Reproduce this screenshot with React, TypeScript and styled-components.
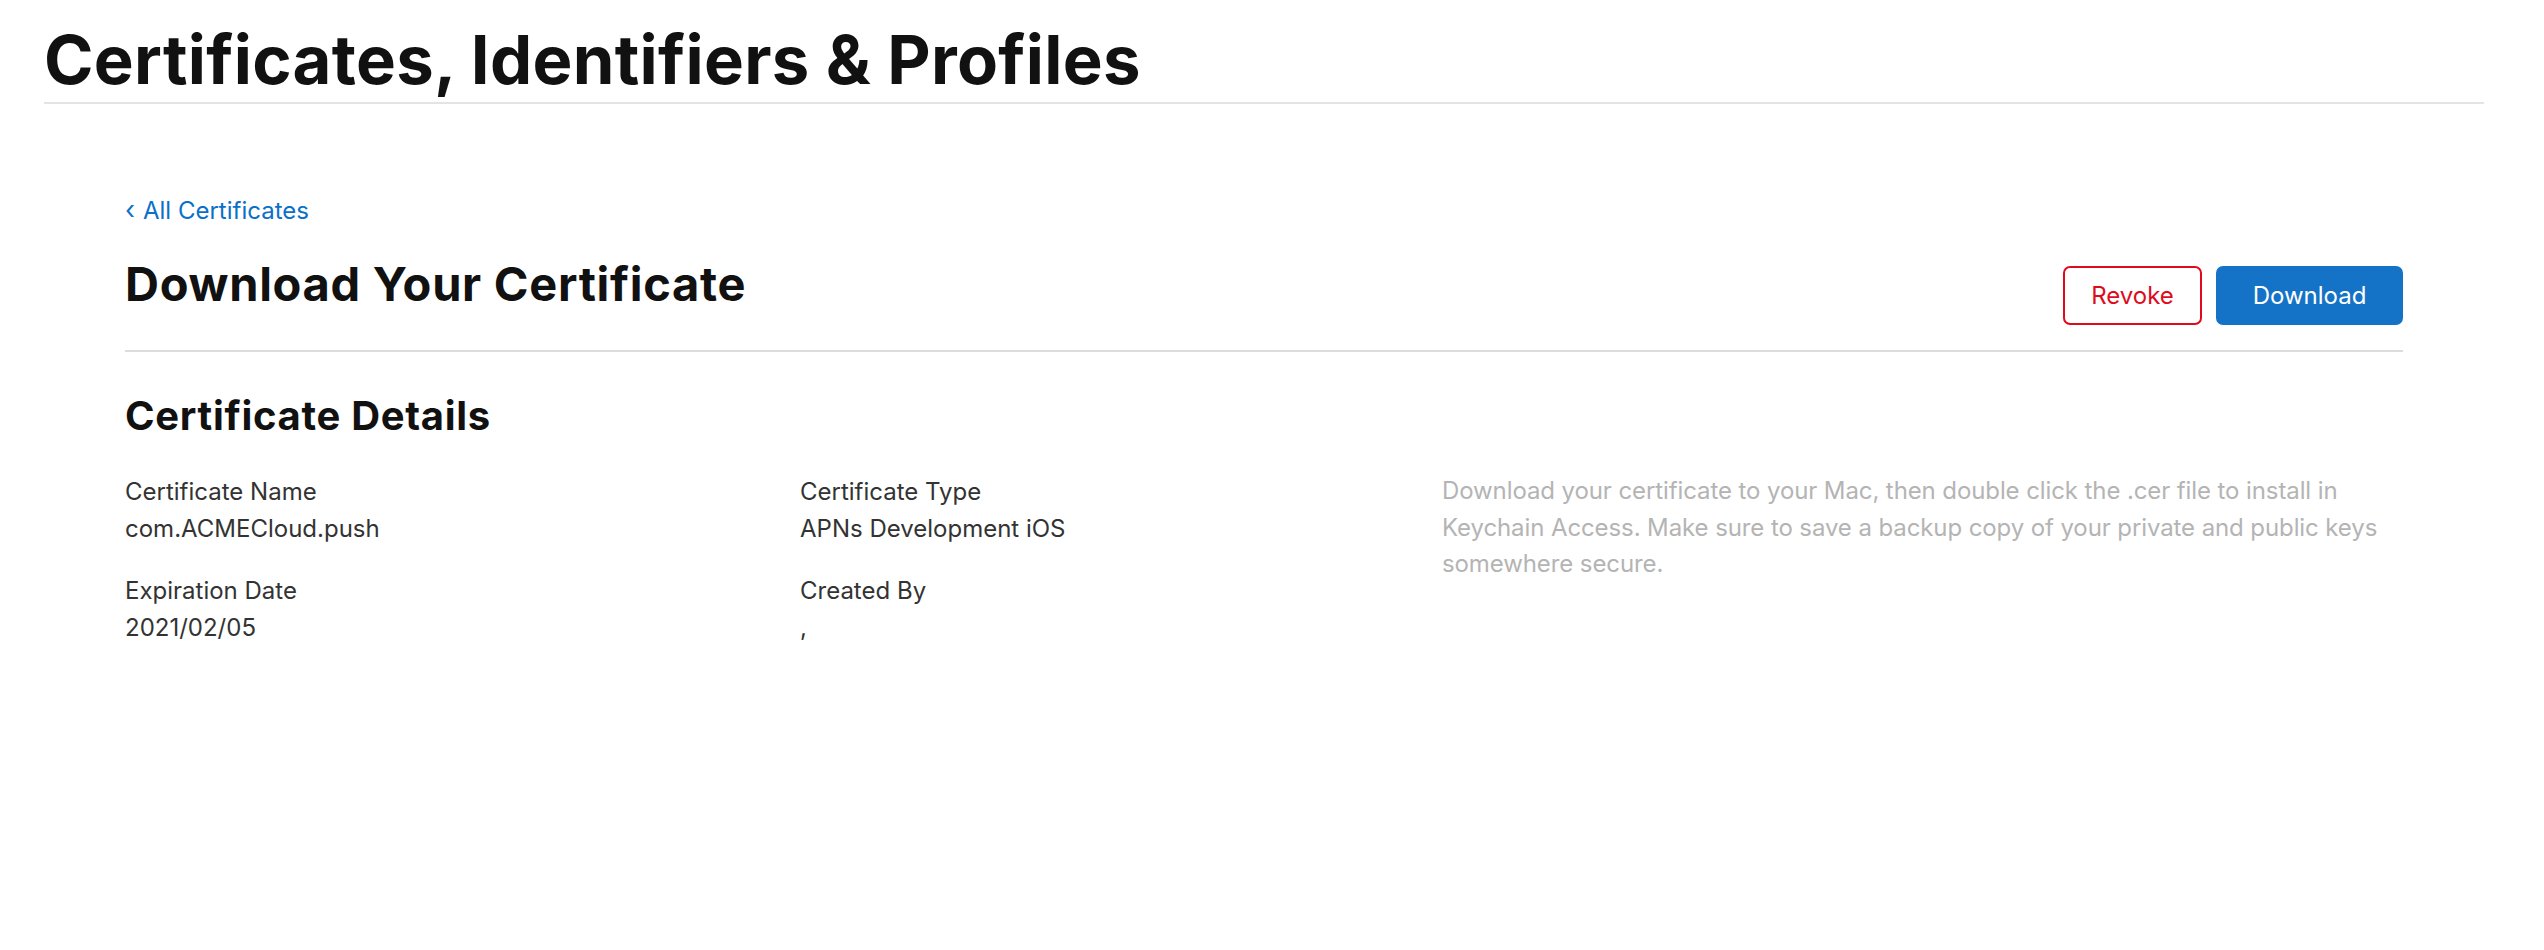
import React from "react";
import styled, { createGlobalStyle } from "styled-components";

const GlobalStyle = createGlobalStyle`
  html, body {
    margin: 0;
    padding: 0;
    background: #ffffff;
  }
  body {
    font-family: Inter, "Noto Sans", "Liberation Sans", sans-serif;
    color: #1d1d1f;
  }
`;

const Page = styled.div`
  width: 2528px;
  min-height: 950px;
  background: #ffffff;
`;

const Header = styled.header`
  padding: 0 44px;
`;

const Title = styled.h1`
  margin: 0;
  padding: 20px 0 2px;
  font-size: 67px;
  line-height: 80px;
  font-weight: 700;
  color: #111111;
  letter-spacing: 0.3px;
  border-bottom: 2px solid #e3e3e3;
`;

const Content = styled.main`
  padding: 0 125px;
`;

const BackLink = styled.a`
  display: inline-flex;
  align-items: center;
  gap: 8px;
  margin-top: 90px;
  font-size: 24px;
  line-height: 34px;
  color: #0a70c9;
  text-decoration: none;
`;

const Chevron = styled.span`
  font-size: 26px;
  line-height: 1;
  position: relative;
  top: -1px;
`;

const HeadRow = styled.div`
  display: flex;
  justify-content: space-between;
  align-items: flex-start;
  margin-top: 28px;
  padding-bottom: 25px;
  border-bottom: 2px solid #dcdcdc;
`;

const PageHeading = styled.h2`
  margin: 0;
  font-size: 47px;
  line-height: 56px;
  font-weight: 700;
  color: #111111;
  letter-spacing: 0.7px;
`;

const Actions = styled.div`
  display: flex;
  gap: 14px;
  margin-top: 10px;
`;

const Button = styled.button<{ $variant: "danger" | "primary" }>`
  box-sizing: border-box;
  height: 59px;
  width: ${(p) => (p.$variant === "danger" ? "139px" : "187px")};
  padding: 0;
  border-radius: 7px;
  font-family: Inter, "Noto Sans", "Liberation Sans", sans-serif;
  font-size: 24px;
  font-weight: 400;
  cursor: pointer;
  border: 2px solid ${(p) => (p.$variant === "danger" ? "#df0b1c" : "#1473c7")};
  background: ${(p) => (p.$variant === "danger" ? "#ffffff" : "#1473c7")};
  color: ${(p) => (p.$variant === "danger" ? "#df0b1c" : "#ffffff")};
`;

const SectionHeading = styled.h3`
  margin: 40px 0 0;
  font-size: 40px;
  line-height: 48px;
  font-weight: 700;
  color: #111111;
  letter-spacing: 0.7px;
`;

const DetailsGrid = styled.div`
  display: grid;
  grid-template-columns: 675px 642px 1fr;
  grid-template-rows: auto auto;
  row-gap: 25px;
  margin-top: 33px;
`;

const Field = styled.div`
  display: flex;
  flex-direction: column;
`;

const Label = styled.span`
  font-size: 24px;
  line-height: 37px;
  color: #333333;
`;

const Value = styled.span`
  font-size: 24px;
  line-height: 37px;
  color: #333333;
`;

const Note = styled.p`
  grid-column: 3;
  grid-row: 1 / span 2;
  margin: 0;
  font-size: 24px;
  line-height: 36.5px;
  letter-spacing: -0.1px;
  color: #b4b4b4;
`;

const fields = [
  { label: "Certificate Name", value: "com.ACMECloud.push" },
  { label: "Certificate Type", value: "APNs Development iOS" },
  { label: "Expiration Date", value: "2021/02/05" },
  { label: "Created By", value: "," },
];

export default function App() {
  return (
    <Page>
      <GlobalStyle />
      <Header>
        <Title>Certificates, Identifiers &amp; Profiles</Title>
      </Header>
      <Content>
        <BackLink href="#">
          <Chevron>‹</Chevron>
          All Certificates
        </BackLink>
        <HeadRow>
          <PageHeading>Download Your Certificate</PageHeading>
          <Actions>
            <Button $variant="danger">Revoke</Button>
            <Button $variant="primary">Download</Button>
          </Actions>
        </HeadRow>
        <SectionHeading>Certificate Details</SectionHeading>
        <DetailsGrid>
          {fields.map((f) => (
            <Field key={f.label}>
              <Label>{f.label}</Label>
              <Value>{f.value}</Value>
            </Field>
          ))}
          <Note>
            Download your certificate to your Mac, then double click the .cer file to install in
            Keychain Access. Make sure to save a backup copy of your private and public keys
            somewhere secure.
          </Note>
        </DetailsGrid>
      </Content>
    </Page>
  );
}
